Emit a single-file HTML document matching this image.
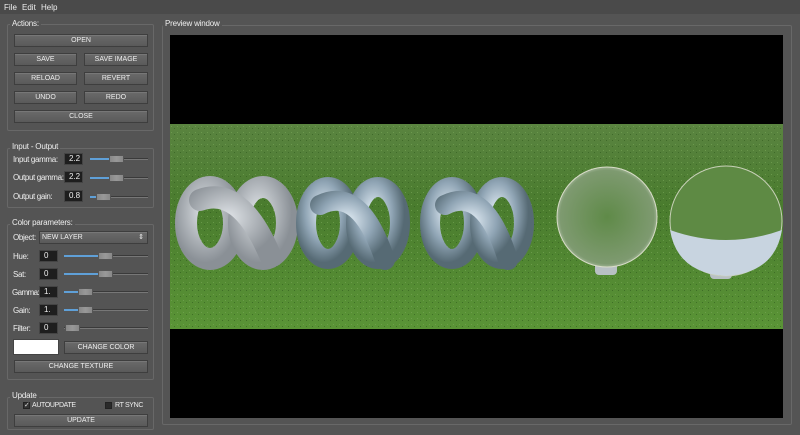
<!DOCTYPE html>
<html><head><style>
*{margin:0;padding:0;box-sizing:border-box}
body{width:800px;height:435px;background:#545454;font-family:"Liberation Sans",sans-serif;font-size:8px;color:#e8e8e8;position:relative;overflow:hidden}
.a{position:absolute}
.menu{left:0;top:0;width:800px;height:14px;background:#4a4a4a}
.menu span{position:absolute;top:3px;font-size:8px;color:#eee}
.grp{position:absolute;border:1px solid #686868;border-radius:2px}
.gl{position:absolute;background:#545454;padding:0 2px;font-size:8px;color:#eee;letter-spacing:-0.2px}
.btn{position:absolute;height:13px;background:linear-gradient(#6a6a6a,#5a5a5a);border:1px solid #3e3e3e;box-shadow:inset 0 1px 0 #777;text-align:center;line-height:11px;font-size:7px;color:#eee}
.lbl{position:absolute;font-size:8px;color:#eee;letter-spacing:-0.35px;white-space:nowrap}
.inp{position:absolute;height:12px;background:#1e1e1e;border:1px solid #444;color:#eee;font-size:8px;line-height:10px;padding-left:4px}
.sl{position:absolute;height:2px;background:#3a3a3a;border-bottom:1px solid #777}
.fill{position:absolute;height:2px;background:#5fa0d8;top:0;left:0}
.hd{position:absolute;width:15px;height:8px;top:-3px;background:linear-gradient(90deg,#888,#999,#888);border:1px solid #555}
</style></head><body>
<div class="a menu"><span style="left:4px">File</span><span style="left:22px">Edit</span><span style="left:41px">Help</span></div>

<div class="grp" style="left:7px;top:24px;width:147px;height:107px"></div>
<div class="gl" style="left:10px;top:19px">Actions:</div>
<div class="btn" style="left:14px;top:34px;width:134px">OPEN</div>
<div class="btn" style="left:14px;top:53px;width:63px">SAVE</div>
<div class="btn" style="left:84px;top:53px;width:64px">SAVE IMAGE</div>
<div class="btn" style="left:14px;top:72px;width:63px">RELOAD</div>
<div class="btn" style="left:84px;top:72px;width:64px">REVERT</div>
<div class="btn" style="left:14px;top:91px;width:63px">UNDO</div>
<div class="btn" style="left:84px;top:91px;width:64px">REDO</div>
<div class="btn" style="left:14px;top:110px;width:134px">CLOSE</div>

<div class="grp" style="left:7px;top:148px;width:147px;height:60px"></div>
<div class="gl" style="left:10px;top:142px">Input - Output</div>
<div class="lbl" style="left:13px;top:155px">Input gamma:</div>
<div class="inp" style="left:64px;top:153px;width:19px">2.2</div>
<div class="sl" style="left:90px;top:158px;width:58px"><div class="fill" style="width:20px"></div><div class="hd" style="left:19px"></div></div>
<div class="lbl" style="left:13px;top:173px">Output gamma:</div>
<div class="inp" style="left:64px;top:171px;width:19px">2.2</div>
<div class="sl" style="left:90px;top:177px;width:58px"><div class="fill" style="width:20px"></div><div class="hd" style="left:19px"></div></div>
<div class="lbl" style="left:13px;top:192px">Output gain:</div>
<div class="inp" style="left:64px;top:190px;width:19px">0.8</div>
<div class="sl" style="left:90px;top:196px;width:58px"><div class="fill" style="width:6px"></div><div class="hd" style="left:6px"></div></div>

<div class="grp" style="left:7px;top:224px;width:147px;height:156px"></div>
<div class="gl" style="left:10px;top:218px">Color parameters:</div>
<div class="lbl" style="left:13px;top:233px">Object:</div>
<div class="btn" style="left:39px;top:231px;width:109px;text-align:left;padding-left:2px;font-size:7px">NEW LAYER<span style="position:absolute;right:3px;top:0">⇕</span></div>
<div class="lbl" style="left:13px;top:252px">Hue:</div>
<div class="inp" style="left:39px;top:250px;width:19px">0</div>
<div class="sl" style="left:64px;top:255px;width:84px"><div class="fill" style="width:35px"></div><div class="hd" style="left:34px"></div></div>
<div class="lbl" style="left:13px;top:270px">Sat:</div>
<div class="inp" style="left:39px;top:268px;width:19px">0</div>
<div class="sl" style="left:64px;top:273px;width:84px"><div class="fill" style="width:35px"></div><div class="hd" style="left:34px"></div></div>
<div class="lbl" style="left:12px;top:288px;letter-spacing:-0.6px">Gamma:</div>
<div class="inp" style="left:39px;top:286px;width:19px">1.</div>
<div class="sl" style="left:64px;top:291px;width:84px"><div class="fill" style="width:15px"></div><div class="hd" style="left:14px"></div></div>
<div class="lbl" style="left:13px;top:306px">Gain:</div>
<div class="inp" style="left:39px;top:304px;width:19px">1.</div>
<div class="sl" style="left:64px;top:309px;width:84px"><div class="fill" style="width:15px"></div><div class="hd" style="left:14px"></div></div>
<div class="lbl" style="left:13px;top:324px">Filter:</div>
<div class="inp" style="left:39px;top:322px;width:19px">0</div>
<div class="sl" style="left:64px;top:327px;width:84px"><div class="hd" style="left:1px"></div></div>
<div class="a" style="left:13px;top:339px;width:46px;height:16px;background:#fff;border:1px solid #444"></div>
<div class="btn" style="left:64px;top:341px;width:84px">CHANGE COLOR</div>
<div class="btn" style="left:14px;top:360px;width:134px">CHANGE TEXTURE</div>

<div class="grp" style="left:7px;top:397px;width:147px;height:33px"></div>
<div class="gl" style="left:10px;top:391px">Update</div>
<div class="a" style="left:23px;top:402px;width:7px;height:7px;background:#333;border:1px solid #222;font-size:7px;line-height:6px;color:#ddd">✓</div>
<div class="lbl" style="left:32px;top:402px;font-size:7px">AUTOUPDATE</div>
<div class="a" style="left:105px;top:402px;width:7px;height:7px;background:#2a2a2a;border:1px solid #222"></div>
<div class="lbl" style="left:115px;top:402px;font-size:7px">RT SYNC</div>
<div class="btn" style="left:14px;top:414px;width:134px">UPDATE</div>

<div class="grp" style="left:162px;top:25px;width:630px;height:400px"></div>
<div class="gl" style="left:163px;top:19px">Preview window</div>
<svg class="a" style="left:170px;top:35px" width="613" height="383" viewBox="0 0 613 383">
<defs>
<linearGradient id="g" x1="0" y1="0" x2="0" y2="1"><stop offset="0" stop-color="#5a8440"/><stop offset=".4" stop-color="#4a7c2e"/><stop offset="1" stop-color="#5a9436"/></linearGradient>
<pattern id="p" width="6" height="6" patternUnits="userSpaceOnUse"><rect width="6" height="6" fill="none"/><rect x="1" y="1" width="1" height="1" fill="#7aa858" opacity=".6"/><rect x="4" y="3" width="1" height="1" fill="#2e5a1c" opacity=".6"/></pattern>
<radialGradient id="k" cx=".4" cy=".35" r=".7"><stop offset="0" stop-color="#e0e4e8"/><stop offset="1" stop-color="#8a9096"/></radialGradient>
<radialGradient id="m" cx=".4" cy=".35" r=".7"><stop offset="0" stop-color="#e8f2fa"/><stop offset=".6" stop-color="#8fa4b4"/><stop offset="1" stop-color="#566a74"/></radialGradient>
<radialGradient id="s" cx=".5" cy=".5" r=".55"><stop offset="0" stop-color="#5f8a48"/><stop offset=".85" stop-color="#7e9a70"/><stop offset="1" stop-color="#c8d4c0"/></radialGradient>
</defs>
<rect width="613" height="383" fill="#000"/>
<rect y="89" width="613" height="205" fill="url(#g)"/>
<rect y="89" width="613" height="205" fill="url(#p)"/>
<g fill="none" stroke-linecap="round">
<g stroke="url(#k)" stroke-width="22"><ellipse cx="40" cy="188" rx="24" ry="36"/><ellipse cx="93" cy="188" rx="24" ry="36"/><path d="M30 165 Q70 150 100 220"/></g>
<g stroke="url(#m)" stroke-width="20"><ellipse cx="158" cy="188" rx="22" ry="36"/><ellipse cx="208" cy="188" rx="22" ry="36"/><path d="M150 170 Q190 150 215 225"/></g>
<g stroke="url(#m)" stroke-width="20"><ellipse cx="282" cy="188" rx="22" ry="36"/><ellipse cx="332" cy="188" rx="22" ry="36"/><path d="M275 170 Q315 150 338 225"/></g>
</g>
<rect x="425" y="226" width="22" height="14" rx="4" fill="#b8c0c4"/>
<ellipse cx="437" cy="182" rx="50" ry="50" fill="url(#s)" stroke="#d8dcc8" stroke-width="1"/>
<rect x="540" y="232" width="22" height="12" rx="4" fill="#b8c0c4"/>
<ellipse cx="556" cy="186" rx="56" ry="55" fill="#5e8a44" stroke="#c8d0b8" stroke-width="1"/>
<path d="M500 195 Q556 215 612 195 Q605 238 556 241 Q507 238 500 195Z" fill="#c8d4e0"/>
</svg>
</body></html>
